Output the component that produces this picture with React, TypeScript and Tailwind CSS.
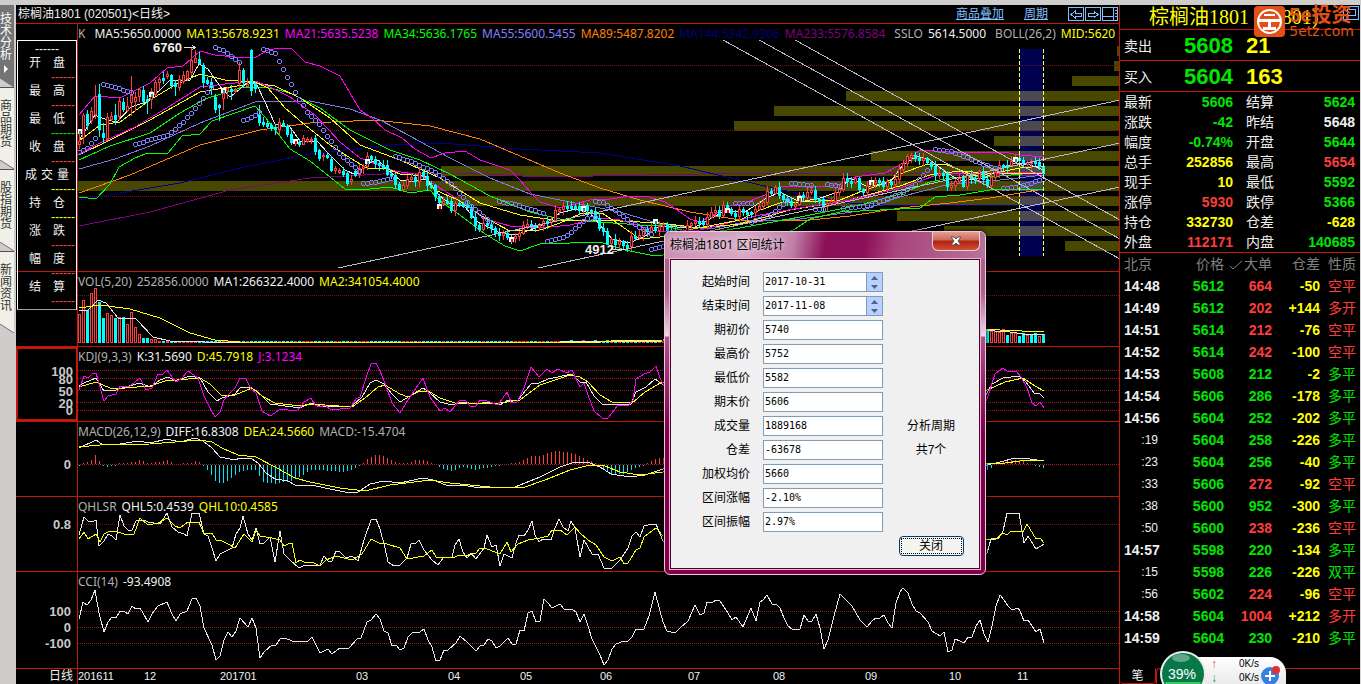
import { type ReactNode } from "react";

const SANS = "font-['Liberation_Sans','Noto_Sans_CJK_SC',sans-serif]";
const LEGEND_FONT = "font-['Noto_Sans','Noto_Sans_CJK_SC',sans-serif]";

const GREEN = "text-[#00e600]";
const RED = "text-[#ff3c3c]";
const YELLOW = "text-[#ffff00]";
const WHITE = "text-[#f0f0f0]";

const BAR_START = 79;
const BAR_STEP = 4;
const BAR_COUNT = 242;

type Point = [number, number];
type Candle = { up: boolean; high: number; top: number; bottom: number; low: number };
type LegendItem = { text: string; color: string };

function parse(points: string): Point[] {
  return points.split(" ").map((pair) => {
    const [x, y] = pair.split(",");
    return [Number(x), Number(y)];
  });
}

function valueAt(points: Point[], x: number) {
  for (let i = 1; i < points.length; i++) {
    const [x0, y0] = points[i - 1];
    const [x1, y1] = points[i];
    if (x <= x1) return y0 + ((y1 - y0) * (x - x0)) / (x1 - x0 || 1);
  }
  return points[points.length - 1][1];
}

function noise(i: number) {
  const v = Math.sin(i * 127.1) * 43758.5453;
  return v - Math.floor(v) - 0.5;
}

// direction, high, body top, body bottom, low
const EARLY_CANDLES: [string, number, number, number, number][] = [
  ["u", 129, 141, 144, 148], ["u", 113, 115, 137, 143], ["d", 110, 114, 125, 129], ["u", 107, 111, 120, 123],
  ["u", 85, 96, 114, 118], ["d", 84, 94, 129, 136], ["d", 123, 133, 137, 143], ["u", 113, 117, 138, 140],
  ["u", 112, 116, 119, 120], ["d", 104, 115, 119, 124], ["u", 97, 101, 116, 119], ["d", 98, 102, 109, 111],
  ["u", 97, 106, 110, 111], ["u", 76, 95, 102, 115], ["u", 92, 97, 101, 110], ["u", 88, 89, 96, 101],
  ["d", 86, 90, 101, 103], ["d", 95, 99, 101, 113], ["u", 88, 91, 99, 108], ["u", 80, 82, 94, 95],
  ["u", 77, 79, 82, 89], ["d", 72, 78, 80, 83], ["u", 71, 74, 76, 78], ["d", 74, 75, 85, 88],
  ["d", 80, 83, 86, 95], ["u", 75, 79, 87, 90], ["u", 71, 75, 81, 83], ["u", 70, 71, 78, 80],
  ["u", 48, 60, 72, 75], ["u", 50, 58, 62, 62], ["d", 52, 59, 63, 64], ["d", 63, 65, 82, 87],
  ["d", 77, 80, 83, 84], ["d", 78, 82, 87, 94], ["d", 94, 97, 109, 112], ["d", 104, 105, 107, 120],
  ["u", 87, 93, 98, 109], ["u", 87, 88, 90, 98], ["d", 85, 89, 91, 99], ["u", 88, 90, 91, 92],
  ["u", 62, 70, 83, 87], ["d", 68, 70, 82, 87], ["u", 78, 84, 86, 86], ["d", 49, 50, 90, 95],
  ["d", 82, 83, 88, 92], ["d", 105, 115, 122, 125], ["d", 117, 122, 124, 126], ["d", 121, 123, 126, 127],
  ["d", 123, 125, 128, 130], ["d", 124, 127, 129, 134], ["u", 118, 122, 129, 134], ["d", 120, 123, 126, 126],
  ["d", 124, 126, 134, 136], ["d", 130, 134, 142, 144], ["u", 139, 140, 143, 145], ["d", 139, 142, 144, 146],
  ["u", 135, 138, 144, 144], ["u", 137, 139, 141, 142], ["u", 137, 139, 140, 143], ["d", 135, 138, 151, 154],
  ["d", 149, 150, 158, 160], ["u", 153, 155, 156, 160], ["d", 152, 155, 157, 158], ["d", 156, 159, 170, 171],
  ["u", 166, 168, 170, 173], ["u", 168, 170, 172, 173], ["d", 167, 171, 174, 176], ["d", 171, 173, 183, 185],
  ["u", 175, 179, 181, 184], ["d", 169, 171, 175, 176],
];

const PRICE_PATH = parse(
  "355,174 361,168 365,160 372,158 380,163 386,170 392,176 398,185 404,186 410,178 418,176 424,177 430,185 436,197 440,204 446,202 452,208 458,207 462,205 466,208 472,221 480,227 488,224 494,229 498,236 506,233 511,238 516,234 522,228 528,224 534,226 540,225 546,220 552,217 558,210 566,209 572,205 578,210 584,208 590,212 596,220 602,232 608,242 614,240 620,242 628,243 634,238 640,234 646,233 652,230 660,222 668,230 680,234 693,224 700,222 706,222 712,215 718,211 726,209 734,213 742,213 750,210 756,205 762,200 768,193 774,190 780,194 786,200 794,204 800,197 808,192 816,195 824,206 832,198 840,183 846,180 852,178 858,184 864,190 870,186 878,182 886,181 892,182 898,175 904,162 908,153 914,155 922,158 928,162 934,172 942,171 948,185 954,180 962,183 970,178 978,174 986,183 992,180 998,168 1004,163 1012,162 1018,157 1024,160 1030,165 1036,167 1044,174",
);

function buildCandles(): Candle[] {
  const candles: Candle[] = EARLY_CANDLES.map(([dir, high, top, bottom, low]) => ({
    up: dir === "u",
    high,
    top,
    bottom,
    low,
  }));
  let open = 174;
  for (let i = candles.length; i < BAR_COUNT; i++) {
    const close = Math.round(valueAt(PRICE_PATH, BAR_START + i * BAR_STEP) + noise(i) * 9);
    const top = Math.min(open, close);
    const bottom = Math.max(open, close, top + 2);
    candles.push({
      up: close < open,
      high: top - Math.round(1 + Math.abs(noise(i + 500)) * 9),
      top,
      bottom,
      low: bottom + Math.round(1 + Math.abs(noise(i + 900)) * 9),
    });
    open = close;
  }
  return candles;
}

const CANDLES = buildCandles();

const PRICE_LINES: { color: string; points: string }[] = [
  { color: "#800080", points: "79,226 150,212 230,190 310,178 400,173 470,173 540,177 700,174 860,173 1044,175" },
  { color: "#000090", points: "79,200 180,183 240,168 310,154 390,145 440,143 520,149 600,153 680,166 760,185 800,194 850,203 900,206 1044,205" },
  { color: "#ff8000", points: "79,193 130,175 200,145 260,130 310,123 375,120 430,126 480,139 520,156 560,173 600,188 640,200 690,212 740,220 800,221 850,216 900,208 950,203 990,198 1044,189" },
  { color: "#7878e0", points: "79,169 115,159 150,146 200,123 255,102 310,101 350,109 380,120 410,136 450,158 490,178 530,194 580,204 620,212 660,224 710,229 745,222 800,219 860,211 900,197 950,184 1000,180 1044,175" },
  { color: "#00ff00", points: "79,160 110,146 150,133 180,113 205,99 240,88 265,87 290,93 320,108 350,130 390,150 420,160 450,174 490,196 530,212 560,219 600,222 640,225 664,226 700,234 740,228 800,217 860,205 900,194 930,182 950,178 1000,176 1044,172" },
  { color: "#ffff00", points: "79,155 110,140 150,120 200,92 255,83 275,86 300,98 330,118 360,145 400,160 440,178 480,203 520,215 560,221 600,220 660,223 700,228 740,224 790,210 850,200 900,186 930,175 960,171 1000,174 1044,173" },
  { color: "#ff00ff", points: "79,154 100,143 135,127 170,106 200,87 225,84 255,81 270,87 290,97 315,115 340,142 360,158 395,171 420,175 440,188 465,204 485,219 510,226 540,228 570,225 600,218 620,220 660,232 700,230 760,215 800,208 850,200 900,188 940,174 1000,173 1044,172" },
  { color: "#ffff00", points: "79,141 100,125 120,122 150,100 175,85 200,74 225,80 255,82 268,88 285,108 305,125 330,145 355,161 367,168 385,168 400,174 425,176 435,190 458,200 480,215 510,231 540,230 560,223 580,214 602,213 620,225 640,239 660,237 693,229 740,220 760,210 780,203 800,202 840,200 860,192 885,183 905,172 925,165 945,164 960,170 975,176 1000,172 1020,168 1044,166" },
  { color: "#00ff00", points: "79,197 96,199 110,184 119,167 135,158 145,154 168,153 182,136 200,134 212,121 255,106 265,117 290,149 310,161 330,177 345,189 360,190 390,187 410,193 430,190 440,201 460,215 485,234 505,246 520,251 540,244 570,243 600,242 625,250 650,255 663,255 760,245 795,229 810,219 840,212 880,210 920,208 935,197 960,195 990,190 1010,189 1044,189" },
  { color: "#ff00ff", points: "79,115 95,96 120,98 150,83 167,68 183,66 200,51 215,55 235,57 256,57 268,50 280,48 291,48 305,62 320,66 340,76 360,110 372,118 385,130 402,138 415,149 431,158 445,153 465,151 480,160 495,165 510,170 520,180 530,192 540,202 560,208 575,204 590,200 610,199 630,196 650,197 665,202 680,212 690,219 700,222 715,214 730,206 745,203 765,195 780,187 795,186 830,186 840,184 855,177 885,173 905,162 920,150 950,152 1003,152 1020,155 1044,157" },
  { color: "#e8e8e8", points: "79,140 95,115 107,120 117,122 131,107 146,102 160,90 170,80 190,80 199,64 208,69 222,89 230,97 240,89 248,82 256,83 265,102 275,124 290,127 300,141 318,142 328,153 345,170 356,175 368,163 378,160 388,170 400,180 412,182 425,179 440,196 452,205 464,206 478,222 498,232 515,235 530,230 545,224 560,213 575,209 590,213 600,225 612,239 630,243 645,236 660,226 693,228 710,219 725,211 745,212 765,199 780,192 800,202 820,198 838,192 850,178 868,187 890,182 903,165 917,156 930,160 943,170 960,181 985,178 998,170 1015,163 1030,165 1044,170" },
];

// stop-and-reverse dots, one run per trend
const SAR_RUNS = [
  "79,152 87,148 95,138", "103,84 115,87 131,92", "135,144 151,139 167,135 183,122 195,108 211,87", "215,47 225,51 239,62",
  "243,120 251,117 259,112", "263,49 275,53 284,71 295,92 307,112 319,124 339,153 359,171", "363,183 375,182 391,178",
  "395,156 411,161 435,172 451,184 470,205 491,222", "499,201 515,204 543,213", "547,241 565,237 587,218 595,217",
  "595,201 603,202 619,213 631,222 651,234", "651,249 663,246", "735,203 751,203", "751,222 771,214 787,200",
  "791,183 811,185", "815,209 823,209", "827,184 839,186", "843,208 870,205 903,192 915,184 929,168",
  "935,149 951,151 967,157 983,164 999,169", "1003,188 1019,186 1043,179",
];

const SAR_DOTS: Point[] = SAR_RUNS.flatMap((run) => {
  const points = parse(run);
  const dots: Point[] = [];
  for (let x = points[0][0]; x <= points[points.length - 1][0]; x += BAR_STEP) {
    dots.push([x, valueAt(points, x)]);
  }
  return dots;
});

// x, y of each volume-by-price band
const PRICE_BANDS: Point[] = [
  [1117, 46], [1114, 61], [1072, 76], [846, 91], [774, 106], [734, 121], [994, 136],
  [871, 151], [441, 166], [78, 181], [441, 196], [897, 211], [944, 226], [1065, 241],
];

const TREND_LINES = [
  [338, 268, 1120, 100],
  [538, 268, 1120, 143],
  [738, 268, 1120, 187],
  [723, 40, 1120, 259],
  [759, 40, 1120, 239],
  [795, 40, 1120, 220],
];

const SIGNALS: [number, number, string][] = [
  [79, 131, "#00a0a0"], [151, 94, "#00a0a0"], [223, 90, "#00a0a0"], [295, 141, "#ff0000"], [367, 161, "#00a0a0"],
  [439, 206, "#ff0000"], [511, 239, "#ff0000"], [583, 208, "#00a0a0"], [655, 221, "#00a0a0"], [727, 210, "#ff0000"],
  [799, 198, "#808000"], [871, 182, "#808000"], [1015, 159, "#00a0a0"],
];

const VOLUMES: [string, number][] = [
  ["u", 29], ["u", 43], ["d", 33], ["u", 50], ["u", 55], ["d", 41], ["d", 25], ["u", 30], ["u", 28], ["d", 25],
  ["u", 26], ["d", 26], ["u", 19], ["u", 31], ["u", 16], ["u", 9], ["d", 5], ["d", 5], ["u", 4], ["u", 4],
];
const LATE_VOLUMES: [string, number][] = [
  ["d", 14], ["u", 12], ["u", 12], ["u", 11], ["u", 14], ["d", 8], ["u", 10], ["u", 10],
  ["d", 7], ["d", 10], ["u", 8], ["d", 8], ["d", 10], ["u", 7], ["d", 9],
];

const HISTOGRAM = parse(
  "79,-1 84,1 92,4 95,9 99,3 104,-2 116,-1 120,1 136,2 140,4 146,1 160,2 168,4 174,0 192,1 196,3 200,1 204,-2 210,-9 216,-17 222,-19 230,-14 240,-6 250,-5 256,-5 262,-17 275,-19 290,-16 300,-12 310,-5 320,-5 345,-7 355,-3 362,0 366,4 376,10 385,7 396,1 410,1 416,4 424,4 432,1 440,-3 452,-6 462,-2 475,-5 490,-2 505,0 520,2 530,8 540,8 550,12 560,13 575,10 588,4 596,0 604,-5 612,-10 624,-9 632,-4 645,0 655,5 663,6 760,2 900,4 980,-6 987,-5 992,-2 996,1 1010,4 1020,4 1028,1 1036,-1 1044,-3",
);

const VOL_LINES = [
  { color: "#e8e8e8", points: "79,311 88,310 98,300 106,303 118,318 136,319 153,337 170,341 205,342 560,342 663,340 980,330 1010,332 1030,335 1044,334" },
  { color: "#ffff00", points: "79,308 100,305 130,309 160,318 190,333 215,340 240,342 600,342 663,341 980,329 1000,330 1044,332" },
];

const KDJ_LINES = [
  { color: "#e8e8e8", points: "79,386 84,383 96,378 104,391 116,390 125,387 140,383 150,387 160,380 168,377 176,381 190,376 200,378 208,392 217,401 222,398 235,394 241,387 250,387 258,392 270,404 285,406 300,408 311,403 320,406 340,407 352,406 362,397 370,383 376,380 384,384 392,394 400,402 410,396 423,388 430,393 440,402 452,405 462,402 475,404 490,402 500,405 508,400 517,401 531,384 539,383 548,379 572,374 580,382 586,382 594,396 602,404 612,405 631,404 636,392 646,387 655,379 662,384 980,404 987,393 992,384 1003,378 1019,376 1026,382 1034,393 1039,393 1044,398" },
  { color: "#ffff00", points: "79,387 96,382 110,388 125,388 150,386 165,381 200,378 210,384 222,396 235,395 252,388 262,396 275,403 300,406 311,404 325,405 352,407 365,398 378,387 385,385 400,394 408,397 420,391 430,392 440,398 455,403 500,403 520,400 540,385 570,375 580,377 588,382 600,395 612,402 632,403 645,392 662,382 980,392 987,390 1005,382 1023,378 1035,386 1044,391" },
  { color: "#ff00ff", points: "79,390 84,376 88,378 92,374 96,373 104,401 108,396 116,394 120,386 130,386 140,378 146,390 152,388 158,374 163,374 167,370 176,382 182,378 188,371 198,378 204,396 210,408 215,417 220,412 224,400 230,393 235,388 240,378 246,379 251,389 256,393 262,411 270,416 275,413 280,409 296,411 300,408 304,402 311,398 315,405 320,407 325,405 331,410 350,408 356,399 360,397 366,378 371,364 376,363 380,371 386,386 392,403 400,413 408,400 416,388 423,378 430,397 440,411 445,408 450,412 460,400 466,401 470,406 476,406 480,400 487,401 498,405 507,392 511,402 517,402 524,388 531,367 539,377 547,369 552,373 558,369 567,373 572,370 580,387 584,383 588,395 594,411 602,418 608,418 618,405 628,406 633,400 636,379 644,374 650,372 656,366 660,378 664,386 980,410 987,399 995,374 1003,368 1008,372 1016,371 1021,377 1027,388 1032,403 1036,406 1040,402 1044,408" },
];

const MACD_LINES = [
  { color: "#e8e8e8", points: "79,448 96,440 103,445 120,444 138,441 150,443 167,439 180,442 195,438 203,441 212,448 220,457 235,460 240,458 252,459 258,463 266,473 275,479 288,481 295,485 312,485 325,488 350,493 358,492 370,484 384,481 400,483 423,478 433,480 446,485 462,485 480,488 515,487 530,481 540,477 560,467 575,462 590,463 600,467 611,474 630,477 645,475 663,469 980,466 987,465 1000,462 1015,458 1030,459 1044,461" },
  { color: "#ffff00", points: "79,447 100,445 150,444 200,440 212,442 222,448 238,455 256,457 275,467 295,478 310,482 340,488 365,491 390,485 430,480 450,483 490,487 525,487 545,480 570,470 590,465 605,466 620,472 640,475 663,472 980,464 987,463 1005,463 1020,461 1044,460" },
];

const QHLSR_LINES = [
  { color: "#e8e8e8", points: "79,535 84,517 88,521 92,522 96,520 99,546 104,541 108,534 112,536 116,540 120,515 124,526 128,530 132,530 136,521 144,520 148,522 160,524 167,513 172,527 178,532 184,534 187,536 192,513 199,513 204,534 208,536 212,548 216,561 220,554 232,548 236,534 240,528 243,516 248,534 252,540 256,528 260,544 264,543 270,537 275,562 280,531 284,554 290,560 299,568 305,565 320,565 324,556 328,561 332,561 336,551 340,552 346,558 352,556 358,561 364,540 371,520 376,519 380,529 385,548 388,562 394,566 400,565 405,560 407,558 411,544 416,543 419,540 424,550 432,560 438,565 444,557 452,557 455,545 459,539 463,552 467,558 471,553 476,559 484,548 487,535 492,547 496,545 500,566 504,554 512,558 516,543 519,535 524,536 528,530 532,521 535,535 539,542 543,539 551,540 555,528 559,519 563,527 568,531 571,521 575,528 580,557 584,540 592,554 598,554 604,568 612,568 620,560 628,548 632,536 636,532 640,537 644,526 652,524 656,524 660,534 663,541 980,560 987,553 991,539 999,538 1003,531 1007,513 1019,513 1024,543 1028,536 1036,549 1044,544" },
  { color: "#ffff00", points: "79,539 84,532 88,539 96,534 100,542 104,534 110,531 118,532 124,534 134,534 140,518 148,525 158,523 167,518 175,526 180,528 188,522 199,522 204,534 212,533 216,540 222,541 228,544 235,548 244,534 252,542 256,530 260,536 272,538 280,540 284,546 290,543 292,543 296,563 300,560 304,562 312,562 320,566 326,560 336,556 352,560 362,554 371,539 379,543 387,544 400,548 407,559 424,556 432,550 436,557 444,557 452,558 460,555 468,555 476,553 480,548 487,549 500,554 507,542 511,552 518,544 528,540 540,538 548,536 552,530 560,530 567,535 575,527 580,533 588,540 596,545 604,557 612,561 620,557 624,564 628,563 636,550 640,548 644,537 656,528 663,536 980,539 995,540 1003,533 1007,535 1011,531 1023,532 1027,524 1036,539 1040,538 1044,543" },
];

const CCI_LINES = [
  { color: "#e8e8e8", points: "79,619 83,602 87,605 91,600 95,590 99,613 104,632 108,622 112,617 116,618 120,611 124,611 128,614 132,606 136,609 140,608 143,613 148,622 152,614 158,606 167,602 172,614 176,621 180,614 187,611 192,599 196,598 200,606 204,628 212,645 216,660 220,656 224,640 228,632 232,637 236,631 240,618 248,627 252,618 256,628 260,658 264,652 272,645 276,645 280,639 285,638 292,641 300,642 308,641 312,637 320,653 328,649 332,654 340,648 349,648 357,639 361,638 367,622 371,620 376,614 380,619 384,631 388,633 392,646 396,645 400,650 404,648 408,637 412,633 420,632 424,629 428,640 432,647 436,661 440,660 444,650 448,650 456,643 460,636 468,643 476,651 480,646 484,645 488,639 492,641 496,648 500,646 508,638 512,644 516,644 520,630 524,631 528,613 532,611 536,622 540,621 544,599 548,603 552,608 560,604 564,609 572,609 576,612 580,622 584,614 588,626 592,639 600,655 604,665 608,660 612,649 616,644 624,641 628,641 632,637 636,629 644,629 649,616 655,592 660,611 663,622 667,631 675,633 680,628 688,621 695,605 700,615 704,613 707,602 712,603 716,600 720,601 728,613 732,620 736,617 743,627 751,608 756,621 760,602 763,600 767,595 772,604 776,604 780,608 784,618 788,626 792,629 800,629 804,615 808,621 812,621 816,614 820,628 824,649 828,640 834,616 840,594 844,598 852,606 856,613 860,620 867,627 872,621 876,618 880,618 884,615 888,623 892,628 896,603 900,592 903,588 908,593 912,604 916,611 920,613 928,622 932,631 940,636 944,632 948,652 952,650 955,639 960,641 964,643 968,637 972,637 976,626 980,620 984,634 988,642 992,626 996,606 1000,595 1004,600 1008,606 1012,610 1018,608 1020,611 1024,621 1028,620 1036,632 1040,629 1044,643" },
];

const MONTHS: [number, string][] = [
  [78, "201611"], [144, "12"], [220, "201701"], [356, "03"], [448, "04"], [520, "05"],
  [600, "06"], [688, "07"], [773, "08"], [865, "09"], [949, "10"], [1017, "11"],
];

const SIDE_TABS = ["商品期货", "股指期货", "新闻资讯"];

const INFO_ROWS: [string, string][] = [
  ["开盘", RED], ["最高", RED], ["最低", GREEN], ["收盘", RED], ["成交量", YELLOW],
  ["持仓", YELLOW], ["涨跌", RED], ["幅度", RED], ["结算", RED],
];

const QUOTES: [string, string, string, string, string, string][] = [
  ["最新", "5606", GREEN, "结算", "5624", GREEN],
  ["涨跌", "-42", GREEN, "昨结", "5648", WHITE],
  ["幅度", "-0.74%", GREEN, "开盘", "5644", GREEN],
  ["总手", "252856", YELLOW, "最高", "5654", RED],
  ["现手", "10", YELLOW, "最低", "5592", GREEN],
  ["涨停", "5930", RED, "跌停", "5366", GREEN],
  ["持仓", "332730", YELLOW, "仓差", "-628", YELLOW],
  ["外盘", "112171", RED, "内盘", "140685", GREEN],
];

const TRADES: [string, string, string, string, string, string][] = [
  ["14:48", "5612", "664", "-50", "空平", RED],
  ["14:49", "5612", "202", "+144", "多开", RED],
  ["14:51", "5614", "212", "-76", "空平", RED],
  ["14:52", "5614", "242", "-100", "空平", RED],
  ["14:53", "5608", "212", "-2", "多平", GREEN],
  ["14:54", "5606", "286", "-178", "多平", GREEN],
  ["14:56", "5604", "252", "-202", "多平", GREEN],
  [":19", "5604", "258", "-226", "多平", GREEN],
  [":23", "5604", "256", "-40", "多平", GREEN],
  [":33", "5606", "272", "-92", "空平", RED],
  [":38", "5600", "952", "-300", "多平", GREEN],
  [":50", "5600", "238", "-236", "空平", RED],
  ["14:57", "5598", "220", "-134", "多平", GREEN],
  [":15", "5598", "226", "-226", "双平", GREEN],
  [":56", "5602", "224", "-96", "空平", RED],
  ["14:58", "5604", "1004", "+212", "多开", RED],
  ["14:59", "5604", "230", "-210", "多平", GREEN],
];

const FIELDS: { id: string; label: string; value: string; spin?: boolean }[] = [
  { id: "start", label: "起始时间", value: "2017-10-31", spin: true },
  { id: "end", label: "结束时间", value: "2017-11-08", spin: true },
  { id: "open", label: "期初价", value: "5740" },
  { id: "high", label: "最高价", value: "5752" },
  { id: "low", label: "最低价", value: "5582" },
  { id: "close", label: "期末价", value: "5606" },
  { id: "volume", label: "成交量", value: "1889168" },
  { id: "position", label: "仓差", value: "-63678" },
  { id: "average", label: "加权均价", value: "5660" },
  { id: "change", label: "区间涨幅", value: "-2.10%" },
  { id: "amplitude", label: "区间振幅", value: "2.97%" },
];

function Grid({ rows, color = "#800c0c" }: { rows: number[]; color?: string }) {
  return (
    <>
      {rows.map((y) => (
        <line key={y} x1="78" x2="110%" y1={y + 0.5} y2={y + 0.5} stroke={color} strokeDasharray="1 1" />
      ))}
    </>
  );
}

function Lines({ lines }: { lines: { color: string; points: string }[] }) {
  return (
    <>
      {lines.map((line, i) => (
        <polyline key={i} points={line.points} fill="none" stroke={line.color} />
      ))}
    </>
  );
}

function Bars({ items, startX }: { items: [string, number][]; startX: number }) {
  return (
    <>
      {items.map(([dir, height], i) => {
        const x = startX + i * BAR_STEP;
        return dir === "u" ? (
          <rect key={i} x={x - 0.5} y={343.5 - height} width="2" height={height - 1} fill="#000" stroke="#ff3c3c" />
        ) : (
          <rect key={i} x={x - 1} y={343 - height} width="3" height={height} fill="#00ffff" />
        );
      })}
    </>
  );
}

type PanelProps = {
  top: number;
  className: string;
  axisClassName?: string;
  legend: LegendItem[];
  axis?: ReactNode;
  scale?: [string, number][];
  children: ReactNode;
};

function Panel({ top, className, axisClassName = "", legend, axis, scale = [], children }: PanelProps) {
  return (
    <section className={`flex border-b border-[#c01808] ${className}`}>
      <div className={`relative w-[62px] shrink-0 border-r border-[#c01808] ${axisClassName}`}>
        {axis ?? (
          <svg className="absolute inset-0 h-full w-full overflow-hidden">
            <g transform={`translate(-17 ${-top})`}>
              {scale.map(([text, y]) => (
                <text key={text} x="72" y={y + 5} textAnchor="end" fontSize="13" fontWeight="bold" fill="#c8c8c8">
                  {text}
                </text>
              ))}
            </g>
          </svg>
        )}
      </div>
      <div className="relative min-w-0 flex-1">
        <svg className="absolute inset-0 h-full w-full" shapeRendering="crispEdges">
          <g transform={`translate(-78 ${-top})`}>{children}</g>
        </svg>
        <div className={`absolute inset-x-0 top-0 flex h-5 items-center gap-[5px] overflow-hidden text-xs whitespace-nowrap ${LEGEND_FONT}`}>
          {legend.map((item) => (
            <span key={item.text} className={`shrink-0 ${item.color}`}>
              {item.text}
            </span>
          ))}
        </div>
      </div>
    </section>
  );
}

function PriceChart() {
  return (
    <>
      {PRICE_BANDS.map(([x, y]) => (
        <rect key={y} x={x} y={y} width="3000" height="10" fill="#484800" />
      ))}
      <rect x="1020" y="49" width="23" height="207" fill="#000050" />
      {PRICE_BANDS.filter(([x]) => x < 1019).map(([, y]) => (
        <rect key={y} x="1020" y={y} width="23" height="10" fill="#4a4a50" />
      ))}
      <Grid rows={[65, 130, 196]} />
      <Lines lines={PRICE_LINES} />
      {CANDLES.map((c, i) => {
        const x = BAR_START + i * BAR_STEP;
        const color = c.up ? "#ff3c3c" : "#00ffff";
        return (
          <g key={i} stroke={color}>
            <line x1={x + 0.5} x2={x + 0.5} y1={c.high} y2={c.low + 1} />
            {c.up ? (
              <rect x={x - 0.5} y={c.top + 0.5} width="2" height={Math.max(1, c.bottom - c.top)} fill="#000" />
            ) : (
              <rect x={x - 1} y={c.top} width="3" height={c.bottom - c.top + 1} fill={color} stroke="none" />
            )}
          </g>
        );
      })}
      {SAR_DOTS.map(([x, y], i) => (
        <circle key={i} cx={x + 0.5} cy={Math.round(y) + 0.5} r="2" fill="none" stroke="#8080ff" />
      ))}
      {TREND_LINES.map(([x1, y1, x2, y2], i) => (
        <line key={i} x1={x1} y1={y1} x2={x2} y2={y2} stroke="#b8b8c8" />
      ))}
      {SIGNALS.map(([x, y, color]) => (
        <g key={x}>
          <rect x={x - 2} y={y - 2} width="5" height="5" fill="#fff" />
          <rect x={x} y={y} width="2" height="3" fill={color} />
        </g>
      ))}
      <path d="M1019.5 49V256M1043.5 49V256" stroke="#ffff60" strokeDasharray="4 2" />
      <g fontSize="13" fontWeight="bold" fill="#f0f0f0">
        <text x="153" y="52">6760</text>
        <text x="585" y="254">4912</text>
      </g>
      <path d="M184 47.5H195M192 45L195 47.5L192 50" fill="none" stroke="#e0e0e0" />
      <path d="M612 249.5H625" stroke="#e0e0e0" />
    </>
  );
}

function SmallVolumes() {
  const bars: ReactNode[] = [];
  for (let i = VOLUMES.length; i < 150; i++) {
    const x = BAR_START + i * BAR_STEP;
    const h = x > 560 && i % 3 === 0 ? 3 : 2;
    bars.push(
      <rect key={i} x={x - 1} y={343 - h} width="3" height={h} fill={CANDLES[i].up ? "#ff3c3c" : "#00ffff"} />,
    );
  }
  return <>{bars}</>;
}

function Histogram() {
  return (
    <>
      {CANDLES.map((_, i) => {
        const x = BAR_START + i * BAR_STEP;
        const h = Math.round(valueAt(HISTOGRAM, x));
        if (h === 0) return null;
        return (
          <rect
            key={i}
            x={x}
            y={h > 0 ? 464 - h : 465}
            width="1"
            height={Math.abs(h)}
            fill={h > 0 ? "#ff3c3c" : "#00e8f0"}
          />
        );
      })}
    </>
  );
}

function InfoBox() {
  return (
    <div className={`mt-4 ml-px border border-white border-b-neutral-400 py-px text-xs leading-[14px] ${WHITE}`}>
      <div className="text-center">------</div>
      {INFO_ROWS.map(([label, color]) => (
        <div key={label}>
          <div className={label.length > 2 ? "flex justify-center gap-1" : "flex justify-center gap-3"}>
            {label.split("").map((char) => (
              <span key={char}>{char}</span>
            ))}
          </div>
          <div className={`pr-px text-right ${color}`}>------</div>
        </div>
      ))}
    </div>
  );
}

function SideTabs() {
  return (
    <nav className="flex w-4 shrink-0 flex-col pr-[2px] text-xs leading-3">
      <button type="button" className="flex h-[73px] flex-col items-start bg-[#747474] pt-2 text-white">
        <span className="w-3 break-all">技术分析</span>
        <span className="mt-1 ml-1 border-y-4 border-l-4 border-y-transparent border-l-white" />
      </button>
      <TabEnd fill="#747474" />
      {SIDE_TABS.map((tab) => (
        <div key={tab} className="flex flex-col border-t border-[#505050]">
          <button type="button" className="flex h-[72px] items-start bg-[#f0f0e8] pt-3 text-[#303030]">
            <span className="w-3 break-all">{tab}</span>
          </button>
          <TabEnd fill="#f0f0e8" />
        </div>
      ))}
    </nav>
  );
}

function TabEnd({ fill }: { fill: string }) {
  return (
    <svg className="block h-[9px] w-[14px]" viewBox="0 0 14 9">
      <path d="M0 0H14V9Z" fill={fill} />
      <path d="M0 0L14 9" stroke="#707070" />
    </svg>
  );
}

function Toolbar() {
  return (
    <header className="flex h-[19px] items-center justify-between border-b border-[#c01808] pl-[2px] text-xs">
      <h1 className={`whitespace-nowrap ${WHITE}`}>棕榈油1801 (020501)&lt;日线&gt;</h1>
      <div className="flex items-center text-[#80c0ff]">
        <a href="#overlay" className="mr-5 underline">商品叠加</a>
        <a href="#period" className="mr-5 underline">周期</a>
        <button type="button" aria-label="后退">
          <ToolIcon d="M3 7.5L7 4V6H13V9H7V11Z" />
        </button>
        <button type="button" aria-label="前进">
          <ToolIcon d="M13 7.5L9 4V6H3V9H9V11Z" />
        </button>
        <button type="button" aria-label="布局">
          <ToolIcon d="M11.5 1V13M1 9.5H11M13 3.5H15M13 6.5H15M13 9.5H15" />
        </button>
      </div>
    </header>
  );
}

function ToolIcon({ d }: { d: string }) {
  return (
    <svg width="17" height="15" viewBox="0 0 17 15" fill="none" stroke="#80c0ff" shapeRendering="crispEdges">
      <rect x="0.5" y="0.5" width="15" height="13" />
      <path d={d} />
    </svg>
  );
}

function ChartColumn() {
  return (
    <main className="flex min-w-0 flex-1 flex-col">
      <Toolbar />
      <Panel
        top={24}
        className="h-[248px]"
        axis={<InfoBox />}
        legend={[
          { text: "K", color: "mr-1 text-[#b0b0b0]" },
          { text: "MA5:5650.0000", color: WHITE },
          { text: "MA13:5678.9231", color: YELLOW },
          { text: "MA21:5635.5238", color: "text-[#ff00ff]" },
          { text: "MA34:5636.1765", color: "text-[#00ff00]" },
          { text: "MA55:5600.5455", color: "text-[#8080ff]" },
          { text: "MA89:5487.8202", color: "text-[#ff8000]" },
          { text: "MA144:5342.9306", color: "text-[#000080]" },
          { text: "MA233:5576.8584", color: "mr-1 text-[#800080]" },
          { text: "SSLO", color: "text-[#b0b0b0]" },
          { text: "5614.5000", color: "mr-1 text-[#f0f0f0]" },
          { text: "BOLL(26,2)", color: "text-[#b0b0b0]" },
          { text: "MID:5620", color: YELLOW },
        ]}
      >
        <PriceChart />
      </Panel>
      <Panel
        top={272}
        className="h-[75px]"
        legend={[
          { text: "VOL(5,20)", color: "text-[#b0b0b0]" },
          { text: "252856.0000", color: "text-[#b0b0b0]" },
          { text: "MA1:266322.4000", color: WHITE },
          { text: "MA2:341054.4000", color: YELLOW },
        ]}
      >
        <Grid rows={[295]} />
        <Bars items={VOLUMES} startX={BAR_START} />
        <SmallVolumes />
        <Bars items={LATE_VOLUMES} startX={987} />
        <Lines lines={VOL_LINES} />
      </Panel>
      <Panel
        top={347}
        className="h-[75px]"
        axisClassName="border-2 border-r-2"
        scale={[["100", 369], ["80", 377], ["50", 389], ["20", 401], ["0", 408]]}
        legend={[
          { text: "KDJ(9,3,3)", color: "text-[#b0b0b0]" },
          { text: "K:31.5690", color: WHITE },
          { text: "D:45.7918", color: YELLOW },
          { text: "J:3.1234", color: "text-[#ff00ff]" },
        ]}
      >
        <Grid rows={[370, 378, 390, 402, 410]} color="#b01818" />
        <Lines lines={KDJ_LINES} />
      </Panel>
      <Panel
        top={422}
        className="h-[75px]"
        scale={[["0", 464]]}
        legend={[
          { text: "MACD(26,12,9)", color: "text-[#b0b0b0]" },
          { text: "DIFF:16.8308", color: WHITE },
          { text: "DEA:24.5660", color: YELLOW },
          { text: "MACD:-15.4704", color: "text-[#b0b0b0]" },
        ]}
      >
        <Grid rows={[464]} color="#b01818" />
        <Histogram />
        <Lines lines={MACD_LINES} />
      </Panel>
      <Panel
        top={497}
        className="h-[75px]"
        scale={[["0.8", 524]]}
        legend={[
          { text: "QHLSR", color: "text-[#b0b0b0]" },
          { text: "QHL5:0.4539", color: WHITE },
          { text: "QHL10:0.4585", color: YELLOW },
        ]}
      >
        <Grid rows={[524]} />
        <Lines lines={QHLSR_LINES} />
      </Panel>
      <Panel
        top={572}
        className="min-h-[97px] flex-1"
        scale={[["100", 611], ["0", 627], ["-100", 643]]}
        legend={[
          { text: "CCI(14)", color: "text-[#b0b0b0]" },
          { text: "-93.4908", color: WHITE },
        ]}
      >
        <Grid rows={[611, 627, 643]} color="#b01818" />
        <Lines lines={CCI_LINES} />
      </Panel>
      <div className="flex h-[15px] items-center">
        <div className={`w-[62px] shrink-0 border-r border-[#c01808] pr-1 text-right text-xs leading-[15px] ${WHITE}`}>
          日线
        </div>
        <svg className="h-[15px] min-w-0 flex-1" fontSize="11" fill="#f0f0f0">
          {MONTHS.map(([x, label]) => (
            <text key={x} x={x - 78} y="11">
              {label}
            </text>
          ))}
        </svg>
      </div>
    </main>
  );
}

function Watermark() {
  return (
    <div className="absolute top-px right-[6px] flex items-start gap-1 text-[#e05018]">
      <svg width="31" height="31" viewBox="0 0 31 31">
        <rect width="31" height="31" rx="4" fill="#e05018" />
        <circle cx="15.5" cy="15.5" r="11.5" fill="none" stroke="#fff" strokeWidth="2" />
        <path d="M10 9H21" stroke="#fff" strokeWidth="2" />
        <path d="M5 14.5H26M15.5 14V23M9 22.5H22" stroke="#fff" strokeWidth="3" fill="none" />
      </svg>
      <div className="flex flex-col">
        <span className="text-xl leading-[19px] font-bold whitespace-nowrap">5e投资</span>
        <span className="font-['DejaVu_Sans',sans-serif] text-sm leading-3">5etz.com</span>
      </div>
    </div>
  );
}

function OrderRow({ label, price, lots }: { label: string; price: string; lots: string }) {
  return (
    <div className="grid h-[31px] grid-cols-[50px_59px_1fr] items-center border-b border-[#c01808] pl-1">
      <span className={`text-sm ${WHITE}`}>{label}</span>
      <span className={`text-right text-[22px] font-bold ${GREEN}`}>{price}</span>
      <span className={`pl-[13px] text-[22px] font-bold ${YELLOW}`}>{lots}</span>
    </div>
  );
}

function QuotePanel() {
  return (
    <aside className="flex w-[242px] shrink-0 flex-col border-x border-l-[#c01808] border-r-[#d8d8d8] text-sm">
      <div className="relative flex h-[25px] items-center justify-between border-b border-[#c01808] pl-[29px]">
        <h2 className="font-['Liberation_Serif','Noto_Sans_CJK_SC',serif] text-xl leading-6 whitespace-nowrap text-[#ffff00]">
          棕榈油1801 (P1801)
        </h2>
        <button type="button" aria-label="窗口" className="absolute top-px right-px">
          <svg width="16" height="15" viewBox="0 0 16 15" fill="none" stroke="#80c0ff" shapeRendering="crispEdges">
            <rect x="0.5" y="0.5" width="15" height="13" />
            <rect x="4.5" y="3.5" width="8" height="6" />
          </svg>
        </button>
        <Watermark />
      </div>
      <OrderRow label="卖出" price="5608" lots="21" />
      <OrderRow label="买入" price="5604" lots="163" />
      <dl className="border-b border-[#c01808]">
        {QUOTES.map(([label, value, color, label2, value2, color2]) => (
          <div key={label} className="grid h-5 grid-cols-[50px_59px_1fr_1fr] items-center pr-[5px] pl-1">
            <dt className={WHITE}>{label}</dt>
            <dd className={`text-right font-bold ${color}`}>{value}</dd>
            <dt className={`pl-[13px] ${WHITE}`}>{label2}</dt>
            <dd className={`text-right font-bold ${color2}`}>{value2}</dd>
          </div>
        ))}
      </dl>
      <table className="w-full table-fixed border-collapse text-right">
        <thead>
          <tr className="h-[22px] whitespace-nowrap text-[#808080]">
            <th className="w-[45px] p-0 pl-1 text-left font-normal">北京</th>
            <th className="w-[59px] p-0 font-normal">价格</th>
            <th className="w-12 p-0 font-normal">
              <svg className="mr-px inline h-[11px] w-[14px]" viewBox="0 0 14 11" fill="none" stroke="currentColor">
                <path d="M1 6L4 9L13 1" />
              </svg>
              大单
            </th>
            <th className="w-12 p-0 font-normal">仓差</th>
            <th className="p-0 pr-1 font-normal">性质</th>
          </tr>
        </thead>
        <tbody className="font-bold">
          {TRADES.map(([time, price, lots, change, kind, color]) => (
            <tr key={time} className="h-[22px]">
              <td className={time.startsWith(":") ? `p-0 pr-[7px] text-xs font-normal ${WHITE}` : `p-0 pl-1 text-left ${WHITE}`}>
                {time}
              </td>
              <td className={`p-0 ${GREEN}`}>{price}</td>
              <td className={`p-0 ${color}`}>{lots}</td>
              <td className={`p-0 ${YELLOW}`}>{change}</td>
              <td className={`p-0 pr-1 font-normal ${color}`}>{kind}</td>
            </tr>
          ))}
        </tbody>
      </table>
      <div className="mt-auto flex h-4 text-xs leading-4">
        <button type="button" className={`w-9 rounded-b-sm border-r border-b border-[#c01808] ${WHITE}`}>笔</button>
        <div className="flex-1 rounded-tl-sm border-t border-l border-[#c01808]" />
      </div>
    </aside>
  );
}

function SpinButtons({ label }: { label: string }) {
  return (
    <span className="flex w-4 flex-col items-center border-l border-[#7f9db9] bg-[#b8d0ff]">
      <button type="button" aria-label={`${label}增加`} className="flex h-[9px] w-full items-center justify-center">
        <svg width="7" height="4" viewBox="0 0 7 4" fill="#4d6185"><path d="M3.5 0L7 4H0Z" /></svg>
      </button>
      <button type="button" aria-label={`${label}减少`} className="flex h-[9px] w-full items-center justify-center">
        <svg width="7" height="4" viewBox="0 0 7 4" fill="#4d6185"><path d="M0 0H7L3.5 4Z" /></svg>
      </button>
    </span>
  );
}

function StatsDialog() {
  return (
    <div
      role="dialog"
      aria-labelledby="stats-title"
      className="absolute top-[231px] left-[664px] w-[322px] rounded-md border border-[#f0c8e0] bg-[linear-gradient(180deg,#b0608c_0px,#b0608c_60px,#f0d8e8_104px,#b0508a_105px,#80004c_200px,#80004c_100%)] px-[5px] pb-[5px] shadow-[0_0_4px_#000]"
    >
      <div className="-mx-[5px] flex h-[27px] items-start justify-between rounded-t-md bg-[linear-gradient(100deg,#c890b0_0%,#d8a8c4_25%,#c080a8_40%,#8c1058_50%,#8c1058_62%,#a8447c_72%,#b87498_100%)] px-[5px]">
        <h2 id="stats-title" className={`pt-1 text-xs leading-[18px] text-black ${LEGEND_FONT} [text-shadow:0_0_6px_#fff]`}>
          棕榈油1801 区间统计
        </h2>
        <button
          type="button"
          aria-label="关闭窗口"
          className="flex h-[19px] w-12 items-center justify-center rounded-b-md border border-t-0 border-[#f0d0d8] bg-[linear-gradient(180deg,#e0a090_0%,#d06858_45%,#b02010_50%,#d05030_100%)]"
        >
          <svg width="12" height="10" viewBox="0 0 12 10">
            <path d="M1 1H4L6 3L8 1H11L8 5L11 9H8L6 7L4 9H1L4 5Z" fill="#fff" stroke="#505058" />
          </svg>
        </button>
      </div>
      <form className="grid grid-cols-[92px_120px_1fr] gap-y-1 border border-[#500030] bg-[#f0f0f0] pt-3 pb-3 text-xs text-black outline outline-[#e8b8d0]">
        {FIELDS.map((field) => (
          <div key={field.id} className="contents">
            <label htmlFor={field.id} className="col-start-1 pr-[13px] text-right leading-5">
              {field.label}
            </label>
            <div className="col-start-2 flex h-5 border border-[#7f9db9] bg-white">
              <input
                id={field.id}
                type="text"
                defaultValue={field.value}
                className="min-w-0 flex-1 pl-px font-['DejaVu_Sans_Mono',monospace] text-[10px] outline-none"
              />
              {field.spin && <SpinButtons label={field.label} />}
            </div>
          </div>
        ))}
        <span className="col-start-3 row-start-7 text-center leading-5">分析周期</span>
        <span className="col-start-3 row-start-8 text-center leading-5">共7个</span>
        <button
          type="button"
          className="col-start-3 row-start-12 h-5 w-[65px] justify-self-center rounded-sm border border-[#003c74] bg-[#f4f4f0] p-px"
        >
          <span className="flex h-full items-center justify-center border border-dotted border-black">关闭</span>
        </button>
      </form>
    </div>
  );
}

function SpeedBall() {
  return (
    <div className="absolute right-[75px] bottom-0 flex h-[33px] w-[127px] items-start overflow-hidden">
      <div className="mt-[6px] ml-6 flex h-10 flex-1 rounded-tr-2xl bg-linear-to-b from-white to-[#e0e0e0] pl-7 text-[10px] leading-[14px] text-black">
        <div>
          <div className="flex w-12 items-center justify-between">
            <span className="text-xs leading-3 text-[#e85030]">↑</span>
            <span>0K/s</span>
          </div>
          <div className="flex w-12 items-center justify-between">
            <span className="text-xs leading-3 text-[#10a050]">↓</span>
            <span>0K/s</span>
          </div>
        </div>
      </div>
      <svg className="absolute inset-0" width="127" height="33" viewBox="0 0 127 33">
        <circle cx="24" cy="23" r="23" fill="#e8f0ec" />
        <circle cx="24" cy="23" r="21" fill="#087848" />
        <path d="M6 31H42L36 44H12Z" fill="#40c860" />
        <ellipse cx="22" cy="7" rx="9" ry="4" fill="#fff" opacity="0.35" />
        <text x="23" y="28" textAnchor="middle" fontSize="14" fill="#fff">39%</text>
        <circle cx="111" cy="25" r="9" fill="#3880e0" />
        <path d="M111 20V30M106 25H116" stroke="#fff" strokeWidth="2" />
        <circle cx="117" cy="19" r="4" fill="#e03030" />
      </svg>
    </div>
  );
}

export default function App() {
  return (
    <div className={`relative flex min-h-screen overflow-hidden bg-[#cfcdcc] pt-[5px] ${SANS}`}>
      <SideTabs />
      <div className="flex min-w-0 flex-1 bg-black">
        <ChartColumn />
        <QuotePanel />
      </div>
      <StatsDialog />
      <SpeedBall />
    </div>
  );
}
